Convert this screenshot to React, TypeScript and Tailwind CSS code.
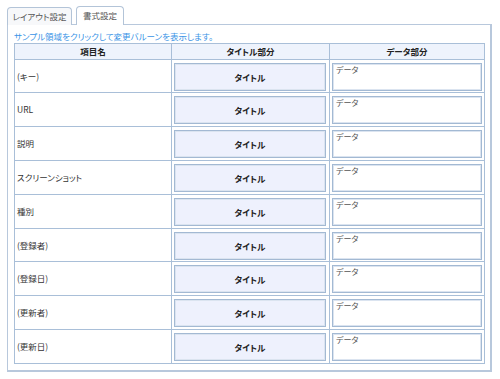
const fields = [
  "(キー)",
  "URL",
  "説明",
  "スクリーンショット",
  "種別",
  "(登録者)",
  "(登録日)",
  "(更新者)",
  "(更新日)",
];

// row heights incl. bottom border, measured from the screenshot
const rowHeights = [33, 34, 34, 34, 34, 33, 34, 34, 34];

const font =
  "font-['Noto_Sans_CJK_JP','Liberation_Sans',sans-serif] [font-feature-settings:'palt']";

function Tabs() {
  return (
    <div className="flex items-end gap-[4px] pl-[7px] pt-[6px] h-[24px]">
      <div className="flex h-[18px] w-[65px] items-center justify-center rounded-t-[4px] border border-b-0 border-[#b3c4d8] bg-[#f7f8fa] text-[8.5px] text-[#555] -mb-px">
        レイアウト設定
      </div>
      <div className="relative z-10 -mb-px flex h-[19px] w-[48px] items-center justify-center rounded-t-[4px] border border-b-0 border-[#b3c4d8] bg-white pb-[2px] text-[8.5px] text-[#555]">
        書式設定
      </div>
    </div>
  );
}

function Row({ label, height }: { label: string; height: number }) {
  return (
    <div className="flex" style={{ height }}>
      <div className="flex w-[157px] items-center border-r border-b border-[#a9bfd8] pl-[2px] text-[8.5px] text-[#333]">
        {label}
      </div>
      <div className="flex w-[158px] flex-col border-r border-b border-[#a9bfd8] pl-[2px] pt-[3px]">
        <div className="flex h-[28px] w-[152px] items-center justify-center border border-[#a3b9d3] bg-[#eef1fd] text-[8.5px] font-bold text-[#222] shadow-[inset_0_0_0_1px_#dbe4f0]">
          タイトル
        </div>
      </div>
      <div className="flex w-[155px] flex-col border-r border-b border-[#a9bfd8] pl-[2px] pt-[3px]">
        <div className="h-[28px] w-[150px] border border-[#a3b9d3] bg-white pl-[3px] pt-[1px] text-[8px] leading-[10px] text-[#555] shadow-[inset_0_0_0_1px_#dbe4f0]">
          データ
        </div>
      </div>
    </div>
  );
}

export default function App() {
  return (
    <div className={`h-[379px] w-[500px] bg-white ${font}`}>
      <Tabs />
      <div className="ml-[7px] h-[348px] w-[485px] border border-r-2 border-b-2 border-[#b8c8dc] pl-[6px]">
        <div className="h-[18px] pt-[5px] text-[8.5px] leading-[13px] text-[#3a94e6]">
          サンプル領域をクリックして変更バルーンを表示します。
        </div>
        <div className="w-[471px] border-l border-t border-[#a9bfd8]">
          <div className="flex h-[16px] bg-[#eef3fc] text-[8.5px] font-bold text-[#222]">
            <div className="flex w-[157px] items-center justify-center border-r border-b border-[#a9bfd8]">
              項目名
            </div>
            <div className="flex w-[158px] items-center justify-center border-r border-b border-[#a9bfd8]">
              タイトル部分
            </div>
            <div className="flex w-[155px] items-center justify-center border-r border-b border-[#a9bfd8]">
              データ部分
            </div>
          </div>
          {fields.map((f, i) => (
            <Row key={f} label={f} height={rowHeights[i]} />
          ))}
        </div>
      </div>
    </div>
  );
}
